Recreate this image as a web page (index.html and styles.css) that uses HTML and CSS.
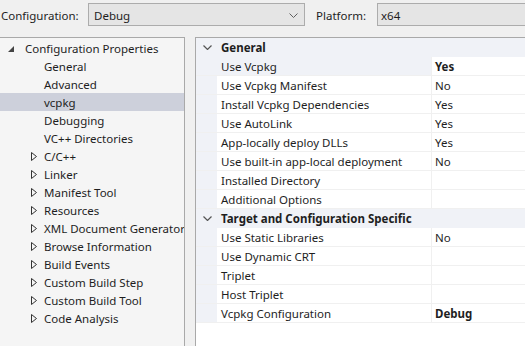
FILE: index.html
```html
<!DOCTYPE html>
<html>
<head>
<meta charset="utf-8">
<link rel="stylesheet" href="styles.css">
</head>
<body>
<div class="toolbar">
  <span class="lbl lbl-config">Configuration:</span>
  <div class="combo combo-config">
    <span>Debug</span>
    <svg class="chev" width="9" height="5" viewBox="0 0 9 5"><path d="M0.5 0.5 L4.5 4.5 L8.5 0.5" fill="none" stroke="#606060" stroke-width="1"/></svg>
  </div>
  <span class="lbl lbl-platform">Platform:</span>
  <div class="combo combo-platform"><span>x64</span></div>
</div>
<div class="main">
  <div class="tree">
    <div class="node root">
      <svg class="exp" width="6" height="6" viewBox="0 0 6 6"><path d="M6 0 L6 6 L0 6 Z" fill="#444"/></svg>
      <span>Configuration Properties</span>
    </div>
    <div class="node leaf">General</div>
    <div class="node leaf">Advanced</div>
    <div class="node leaf sel">vcpkg</div>
    <div class="node leaf">Debugging</div>
    <div class="node leaf">VC++ Directories</div>
    <div class="node branch"><svg class="col" width="6" height="9" viewBox="0 0 6 9"><path d="M0.5 0.5 L5.5 4.5 L0.5 8.5 Z" fill="none" stroke="#333" stroke-width="1"/></svg><span>C/C++</span></div>
    <div class="node branch"><svg class="col" width="6" height="9" viewBox="0 0 6 9"><path d="M0.5 0.5 L5.5 4.5 L0.5 8.5 Z" fill="none" stroke="#333" stroke-width="1"/></svg><span>Linker</span></div>
    <div class="node branch"><svg class="col" width="6" height="9" viewBox="0 0 6 9"><path d="M0.5 0.5 L5.5 4.5 L0.5 8.5 Z" fill="none" stroke="#333" stroke-width="1"/></svg><span>Manifest Tool</span></div>
    <div class="node branch"><svg class="col" width="6" height="9" viewBox="0 0 6 9"><path d="M0.5 0.5 L5.5 4.5 L0.5 8.5 Z" fill="none" stroke="#333" stroke-width="1"/></svg><span>Resources</span></div>
    <div class="node branch"><svg class="col" width="6" height="9" viewBox="0 0 6 9"><path d="M0.5 0.5 L5.5 4.5 L0.5 8.5 Z" fill="none" stroke="#333" stroke-width="1"/></svg><span>XML Document Generator</span></div>
    <div class="node branch"><svg class="col" width="6" height="9" viewBox="0 0 6 9"><path d="M0.5 0.5 L5.5 4.5 L0.5 8.5 Z" fill="none" stroke="#333" stroke-width="1"/></svg><span>Browse Information</span></div>
    <div class="node branch"><svg class="col" width="6" height="9" viewBox="0 0 6 9"><path d="M0.5 0.5 L5.5 4.5 L0.5 8.5 Z" fill="none" stroke="#333" stroke-width="1"/></svg><span>Build Events</span></div>
    <div class="node branch"><svg class="col" width="6" height="9" viewBox="0 0 6 9"><path d="M0.5 0.5 L5.5 4.5 L0.5 8.5 Z" fill="none" stroke="#333" stroke-width="1"/></svg><span>Custom Build Step</span></div>
    <div class="node branch"><svg class="col" width="6" height="9" viewBox="0 0 6 9"><path d="M0.5 0.5 L5.5 4.5 L0.5 8.5 Z" fill="none" stroke="#333" stroke-width="1"/></svg><span>Custom Build Tool</span></div>
    <div class="node branch"><svg class="col" width="6" height="9" viewBox="0 0 6 9"><path d="M0.5 0.5 L5.5 4.5 L0.5 8.5 Z" fill="none" stroke="#333" stroke-width="1"/></svg><span>Code Analysis</span></div>
  </div>
  <div class="grid">
    <div class="cat"><div class="gut"><svg width="9" height="5" viewBox="0 0 9 5"><path d="M0.5 0.5 L4.5 4.5 L8.5 0.5" fill="none" stroke="#555" stroke-width="1.2"/></svg></div><div class="cat-name">General</div></div>
    <div class="row selrow"><div class="gut"></div><div class="name">Use Vcpkg</div><div class="val b">Yes</div></div>
    <div class="row"><div class="gut"></div><div class="name">Use Vcpkg Manifest</div><div class="val">No</div></div>
    <div class="row"><div class="gut"></div><div class="name">Install Vcpkg Dependencies</div><div class="val">Yes</div></div>
    <div class="row"><div class="gut"></div><div class="name">Use AutoLink</div><div class="val">Yes</div></div>
    <div class="row"><div class="gut"></div><div class="name">App-locally deploy DLLs</div><div class="val">Yes</div></div>
    <div class="row"><div class="gut"></div><div class="name">Use built-in app-local deployment</div><div class="val">No</div></div>
    <div class="row"><div class="gut"></div><div class="name">Installed Directory</div><div class="val"></div></div>
    <div class="row"><div class="gut"></div><div class="name">Additional Options</div><div class="val"></div></div>
    <div class="cat"><div class="gut"><svg width="9" height="5" viewBox="0 0 9 5"><path d="M0.5 0.5 L4.5 4.5 L8.5 0.5" fill="none" stroke="#555" stroke-width="1.2"/></svg></div><div class="cat-name">Target and Configuration Specific</div></div>
    <div class="row"><div class="gut"></div><div class="name">Use Static Libraries</div><div class="val">No</div></div>
    <div class="row"><div class="gut"></div><div class="name">Use Dynamic CRT</div><div class="val"></div></div>
    <div class="row"><div class="gut"></div><div class="name">Triplet</div><div class="val"></div></div>
    <div class="row"><div class="gut"></div><div class="name">Host Triplet</div><div class="val"></div></div>
    <div class="row"><div class="gut"></div><div class="name">Vcpkg Configuration</div><div class="val b">Debug</div></div>
  </div>
</div>
</body>
</html>
```

FILE: styles.css
```css
html, body {
  margin: 0;
  padding: 0;
}
body {
  width: 525px;
  height: 346px;
  overflow: hidden;
  background: #f0f0f0;
  font-family: "Noto Sans", "Open Sans", sans-serif;
  font-size: 11.5px;
  color: #1e1e1e;
}
.toolbar {
  display: flex;
  align-items: center;
  height: 23px;
  padding-top: 3px;
  padding-bottom: 11px;
}
.lbl {
  white-space: nowrap;
  padding-top: 1px;
}
.lbl-config {
  margin-left: 1px;
  width: 87px;
}
.combo {
  box-sizing: border-box;
  height: 23px;
  background: #e5e5e5;
  border: 1px solid #acacac;
  display: flex;
  align-items: center;
  padding-left: 5px;
  padding-top: 1px;
}
.combo-config {
  width: 217px;
  justify-content: space-between;
  padding-right: 6px;
}
.lbl-platform {
  margin-left: 11px;
  width: 61px;
}
.combo-platform {
  flex: 1;
  margin-right: -10px;
  padding-left: 3px;
}
.main {
  display: flex;
  gap: 10px;
  height: 310px;
}
.tree {
  width: 184px;
  flex: none;
  box-sizing: content-box;
  background: #f5f5f5;
  border-top: 1px solid #a9a9a9;
  border-right: 1px solid #a9a9a9;
  padding-top: 1px;
  overflow: hidden;
}
.node {
  box-sizing: border-box;
  height: 18px;
  line-height: 17px;
  padding-top: 1px;
  white-space: nowrap;
  display: flex;
  align-items: center;
}
.node svg {
  flex: none;
}
.root {
  padding-left: 8px;
}
.root .exp {
  margin-right: 11px;
}
.leaf {
  padding-left: 44px;
}
.branch {
  padding-left: 31px;
}
.branch .col {
  margin-right: 7px;
}
.sel {
  background: #cdd0db;
}
.grid {
  flex: 1;
  background: #ffffff;
  border-top: 1px solid #a9a9a9;
  border-left: 1px solid #a9a9a9;
}
.cat, .row {
  display: flex;
  height: 18px;
  line-height: 18px;
  border-bottom: 1px solid #f0f0f0;
  white-space: nowrap;
}
.cat-name, .name, .val {
  box-sizing: border-box;
  padding-top: 1px;
  line-height: 17px;
}
.cat {
  background: #f0f2f7;
  border-bottom-color: #f0f2f7;
  font-weight: bold;
}
.gut {
  width: 21px;
  flex: none;
  background: #f0f2f7;
  display: flex;
  align-items: center;
  justify-content: center;
}
.cat .gut {
  padding-left: 1px;
  box-sizing: border-box;
}
.cat-name {
  padding-left: 4px;
}
.name {
  width: 215px;
  flex: none;
  padding-left: 4px;
  border-right: 1px solid #f0f0f0;
}
.selrow .name {
  background: #f0f2f7;
}
.val {
  flex: 1;
  padding-left: 3px;
}
.b {
  font-weight: bold;
}
```
